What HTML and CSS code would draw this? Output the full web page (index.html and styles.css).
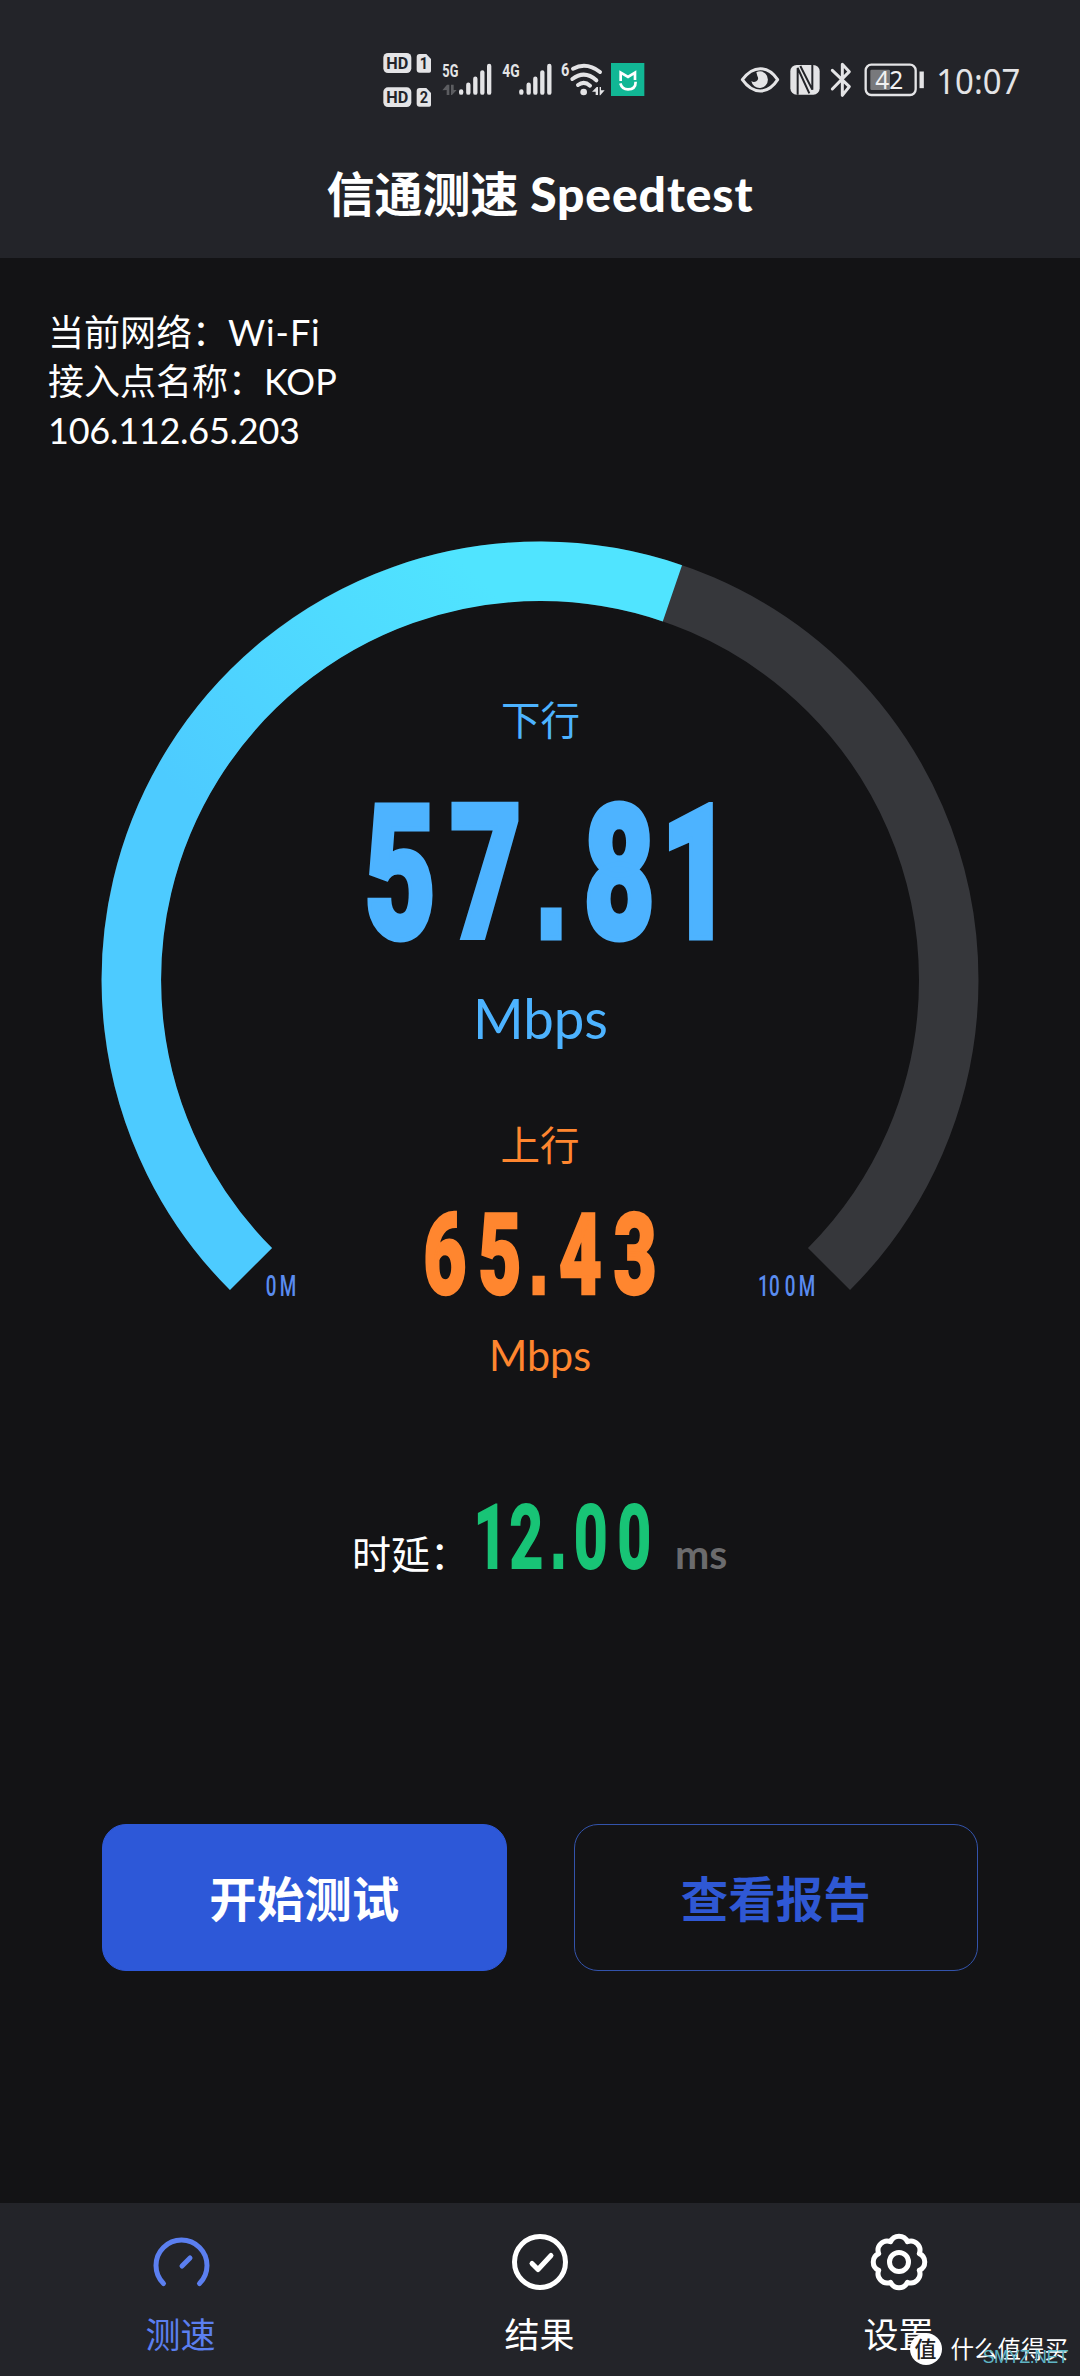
FILE: index.html
```html
<!DOCTYPE html>
<html lang="zh-CN">
<head>
<meta charset="utf-8">
<title>信通测速 Speedtest</title>
<link rel="stylesheet" href="styles.css">
</head>
<body>
<div class="app">
  <header class="header">
    <div class="status">
      <svg class="status-left" viewBox="0 0 870 240">
        <g fill="#e4e4e6">
          <rect x="40" y="39" width="84" height="60" rx="14"/>
          <path d="M149 42h20l14 15v36q0 5-5 5h-29q-9 0-9-9V51q0-9 9-9z"/>
          <rect x="40" y="142" width="84" height="59" rx="14"/>
          <path d="M149 144h20l14 15v36q0 5-5 5h-29q-9 0-9-9v-38q0-9 9-9z"/>
        </g>
        <g class="badge-text">
          <text x="49" y="88" textLength="66" lengthAdjust="spacingAndGlyphs">HD</text>
          <text x="149" y="88" textLength="25" lengthAdjust="spacingAndGlyphs">1</text>
          <text x="49" y="190" textLength="66" lengthAdjust="spacingAndGlyphs">HD</text>
          <text x="149" y="190" textLength="25" lengthAdjust="spacingAndGlyphs">2</text>
        </g>
        <g class="net-text">
          <text x="217" y="111" textLength="48" lengthAdjust="spacingAndGlyphs">5G</text>
          <text x="397" y="111" textLength="52" lengthAdjust="spacingAndGlyphs">4G</text>
          <text x="573" y="109" textLength="25" lengthAdjust="spacingAndGlyphs">6</text>
        </g>
        <path d="M217 151l14-17h7v31h-8v-15zM243 134h8v16h9l-14 15h-3z" fill="#5c5d61"/>
        <g stroke="#e4e4e6" stroke-width="13" stroke-linecap="round">
          <path d="M273.500 154v4M295 134v24M316 116v42M337 97v61M357.500 78v80"/>
          <path d="M454 154v4M476 134v24M496 116v42M517 97v61M538 78v80"/>
        </g>
        <g fill="none" stroke="#e4e4e6" stroke-width="12" stroke-linecap="round">
          <path d="M609 86Q650 65 690 96M607 117Q644 89 679 121M624 135Q642 121 660 137"/>
        </g>
        <circle cx="641" cy="156" r="10" fill="#e4e4e6"/>
        <path d="M666 155l14-14h4v24h-7v-10zM689 141h4v10h11l-13 15h-2z" fill="#e4e4e6"/>
        <rect x="723" y="69" width="100" height="99" fill="#11b795"/>
        <path d="M752 123V98l22 13 21-13v22" fill="none" stroke="#fff" stroke-width="8"/>
        <path d="M751 130q5 18 23 18 23 0 23-23" fill="none" stroke="#fff" stroke-width="8"/>
      </svg>
      <svg class="status-right" viewBox="0 0 960 240">
        <path d="M67 119q24-33 54-33t52 33q-22 34-52 34t-54-34z" fill="none" stroke="#e4e4e6" stroke-width="9" stroke-linejoin="round"/>
        <path d="M120 94a25 25 0 1 1-26 29q7 6 15 1 9-6 3-16l-3-11q5-3 11-3z" fill="#e4e4e6"/>
        <rect x="211" y="75" width="88" height="89" rx="19" fill="#e4e4e6"/>
        <path d="M233 164V84l35 76M277 75v74L241 78" fill="none" stroke="#232429" stroke-width="6"/>
        <path d="M337 91l51 49-21 26V73l21 22-51 52" fill="none" stroke="#e4e4e6" stroke-width="9" stroke-linejoin="round" stroke-linecap="round"/>
        <rect x="437" y="74" width="150" height="91" rx="17" fill="none" stroke="#e4e4e6" stroke-width="7"/>
        <rect x="451" y="89" width="59" height="61" rx="4" fill="#78797c"/>
        <path d="M605 101v37" stroke="#e4e4e6" stroke-width="13" stroke-linecap="square"/>
        <text class="battery-text" x="466" y="147" textLength="84" lengthAdjust="spacingAndGlyphs">42</text>
        <text class="clock-text" x="649" y="162" textLength="252" lengthAdjust="spacingAndGlyphs">10:07</text>
      </svg>
    </div>
    <h1 class="title">信通测速 <span class="title-latin">Speedtest</span></h1>
  </header>

  <main class="main">
    <div class="info">
      <div>当前网络：<span class="wifi">Wi-Fi</span></div>
      <div>接入点名称：<span class="ap">KOP</span></div>
      <div class="ip">106.112.65.203</div>
    </div>

    <svg class="gauge" viewBox="90 530 900 860">
      <defs>
        <linearGradient id="sweep" gradientUnits="userSpaceOnUse" x1="480" y1="580" x2="230" y2="840">
          <stop offset="0" stop-color="#50e4ff"/>
          <stop offset="1" stop-color="#4dcbff"/>
        </linearGradient>
      </defs>
      <path d="M251 1269A408.750 408.750 0 1 1 829 1269" fill="none" stroke="#36373b" stroke-width="59.500"/>
      <path d="M251 1269A408.750 408.750 0 0 1 672.400 593.300" fill="none" stroke="url(#sweep)" stroke-width="59.500"/>
      <g class="down">
        <text class="label" x="540.500" y="735">下行</text>
        <text class="num num-down" transform="translate(540 938) scale(.66 1)" x="-212 -82 17 120 237">57<tspan class="dot">.</tspan>81</text>
        <text class="unit" x="473" y="1039" font-size="56" textLength="135" lengthAdjust="spacingAndGlyphs">Mbps</text>
      </g>
      <g class="up">
        <text class="label" x="540" y="1160">上行</text>
        <text class="num num-up" transform="translate(540 1294) scale(.66 1)" x="-144 -61 -2 61 144">65<tspan class="dot">.</tspan>43</text>
        <text class="unit" x="489" y="1371" font-size="42" textLength="102" lengthAdjust="spacingAndGlyphs">Mbps</text>
      </g>
      <text class="num scale" transform="translate(271 1296) scale(.65 1)" x="0 26">0M</text>
      <text class="num scale" transform="translate(790 1296) scale(.65 1)" x="-41 -24 0 26">100M</text>
    </svg>

    <div class="latency">
      <span class="latency-label">时延：</span>
      <svg class="latency-value" viewBox="470 1480 190 115"><text class="num num-ms" transform="translate(540 1568) scale(.66 1)" x="-75 -21 28 77 143">12<tspan class="dot">.</tspan>00</text></svg>
      <span class="latency-unit">ms</span>
    </div>

    <div class="actions">
      <button class="btn btn-primary">开始测试</button>
      <button class="btn btn-outline">查看报告</button>
    </div>
  </main>

  <nav class="tabs">
    <div class="tab tab-active">
      <svg class="tab-icon" viewBox="0 0 60 60"><path d="M12.500 51.500A25.500 25.500 0 1 1 48.500 51.500M31 34l8-8"/></svg>
      <span>测速</span>
    </div>
    <div class="tab">
      <svg class="tab-icon" viewBox="0 0 60 60"><circle cx="30" cy="30" r="25.500"/><path d="M22 31.500l6 6 13-14"/></svg>
      <span>结果</span>
    </div>
    <div class="tab">
      <svg class="tab-icon" viewBox="0 0 60 60"><circle cx="30" cy="30" r="9.500"/><path d="M21.600 9.700A9.200 9.200 0 0 1 38.400 9.700A9.200 9.200 0 0 1 50.300 21.600A9.200 9.200 0 0 1 50.300 38.400A9.200 9.200 0 0 1 38.400 50.300A9.200 9.200 0 0 1 21.600 50.300A9.200 9.200 0 0 1 9.700 38.400A9.200 9.200 0 0 1 9.700 21.600A9.200 9.200 0 0 1 21.600 9.700z"/></svg>
      <span>设置</span>
    </div>
    <div class="watermark">
      <span class="mark">值</span>
      <span class="mark-name">什么值得买</span>
      <span class="mark-site">SMYZ.NET</span>
    </div>
  </nav>
</div>
</body>
</html>
```
FILE: styles.css
```css
* { box-sizing: border-box; }
body {
  margin: 0;
  background: #131315;
  color: #fff;
  font-family: Lato, "Noto Sans CJK SC", sans-serif;
}
.app {
  width: 1080px;
  height: 2376px;
  display: flex;
  flex-direction: column;
  overflow: hidden;
}
svg { display: block; }

.header { height: 258px; background: #232429; padding-top: 40px; }
.status { display: flex; gap: 60px; padding-left: 370px; height: 80px; }
.status-left { width: 290px; height: 80px; }
.status-right { width: 320px; height: 80px; }
.badge-text { font: 700 50px Roboto, sans-serif; fill: #232429; }
.net-text { font: 700 54px Roboto, sans-serif; fill: #e4e4e6; }
.battery-text { font: 400 76px "Noto Sans", sans-serif; fill: #f0f0f1; }
.clock-text { font: 400 105px "Noto Sans", sans-serif; fill: #e4e4e6; }
.title {
  margin: 46px 0 0;
  font-size: 48px;
  line-height: 56px;
  font-weight: 700;
  text-align: center;
  white-space: nowrap;
}
.title-latin { font-weight: 900; letter-spacing: 0.9px; }

.main { flex: 1; display: flex; flex-direction: column; }
.info { padding: 50px 0 0 48px; font-size: 36px; line-height: 49px; height: 272px; }
.wifi { letter-spacing: 0.9px; }
.ip { letter-spacing: -0.25px; }

.gauge { width: 900px; height: 860px; margin-left: 90px; }
.gauge .label { font-size: 39.5px; text-anchor: middle; }
.down { fill: #4db3ff; }
.up { fill: #ff862f; }
.num { font-family: Roboto, sans-serif; text-anchor: middle; }
.num-down { font-size: 188px; font-weight: 900; stroke: #4db3ff; stroke-width: 5px; }
.num-up { font-size: 113px; font-weight: 900; stroke: #ff862f; stroke-width: 2.5px; }
.num-ms { font-size: 88.5px; font-weight: 700; fill: #18c476; stroke: #18c476; stroke-width: 2px; }
.dot { font-family: "Liberation Sans", sans-serif; font-weight: 700; }
.scale { font-size: 29px; font-weight: 500; fill: #5a8cf0; }

.latency { display: flex; align-items: flex-start; height: 115px; margin-top: 90px; padding-left: 352px; }
.latency-label { width: 118px; font-size: 39px; line-height: 56px; padding-top: 46px; white-space: nowrap; }
.latency-value { width: 190px; height: 115px; }
.latency-unit { margin-left: 15px; padding-top: 46px; font-size: 41px; line-height: 56px; font-weight: 700; color: #6b6b6d; }

.actions { display: flex; gap: 67px; margin: 229px 102px 0; }
.btn {
  flex: 1;
  height: 147px;
  border: 1.5px solid #2d58d8;
  border-radius: 24px;
  font: 700 47.5px/56px Lato, "Noto Sans CJK SC", sans-serif;
  padding: 3px 0 0;
}
.btn-primary { background: #2d58d8; color: #fff; }
.btn-outline { background: transparent; color: #2f58d4; border-color: #3353ab; }

.tabs { position: relative; height: 173px; background: #232429; display: flex; padding: 29px 2px 0 1px; }
.tab { flex: 1; display: flex; flex-direction: column; align-items: center; font-size: 35px; line-height: 50px; }
.tab span { margin-top: 17px; }
.tab-icon { width: 60px; height: 60px; fill: none; stroke: currentColor; stroke-width: 5; stroke-linecap: round; stroke-linejoin: round; }
.tab-active { color: #5b7ff0; }
.watermark { position: absolute; right: 12px; bottom: 11px; display: flex; align-items: center; gap: 9px; }
.mark {
  width: 32px;
  height: 32px;
  border-radius: 50%;
  background: #fff;
  color: #222;
  font-size: 22px;
  line-height: 31px;
  font-weight: 500;
  text-align: center;
}
.mark-name { font-size: 23.5px; line-height: 32px; }
.mark-site { position: absolute; right: 0; bottom: -4px; font: 400 17.5px/24px "Liberation Sans", sans-serif; letter-spacing: -0.4px; color: #5fb4c4; }
```
